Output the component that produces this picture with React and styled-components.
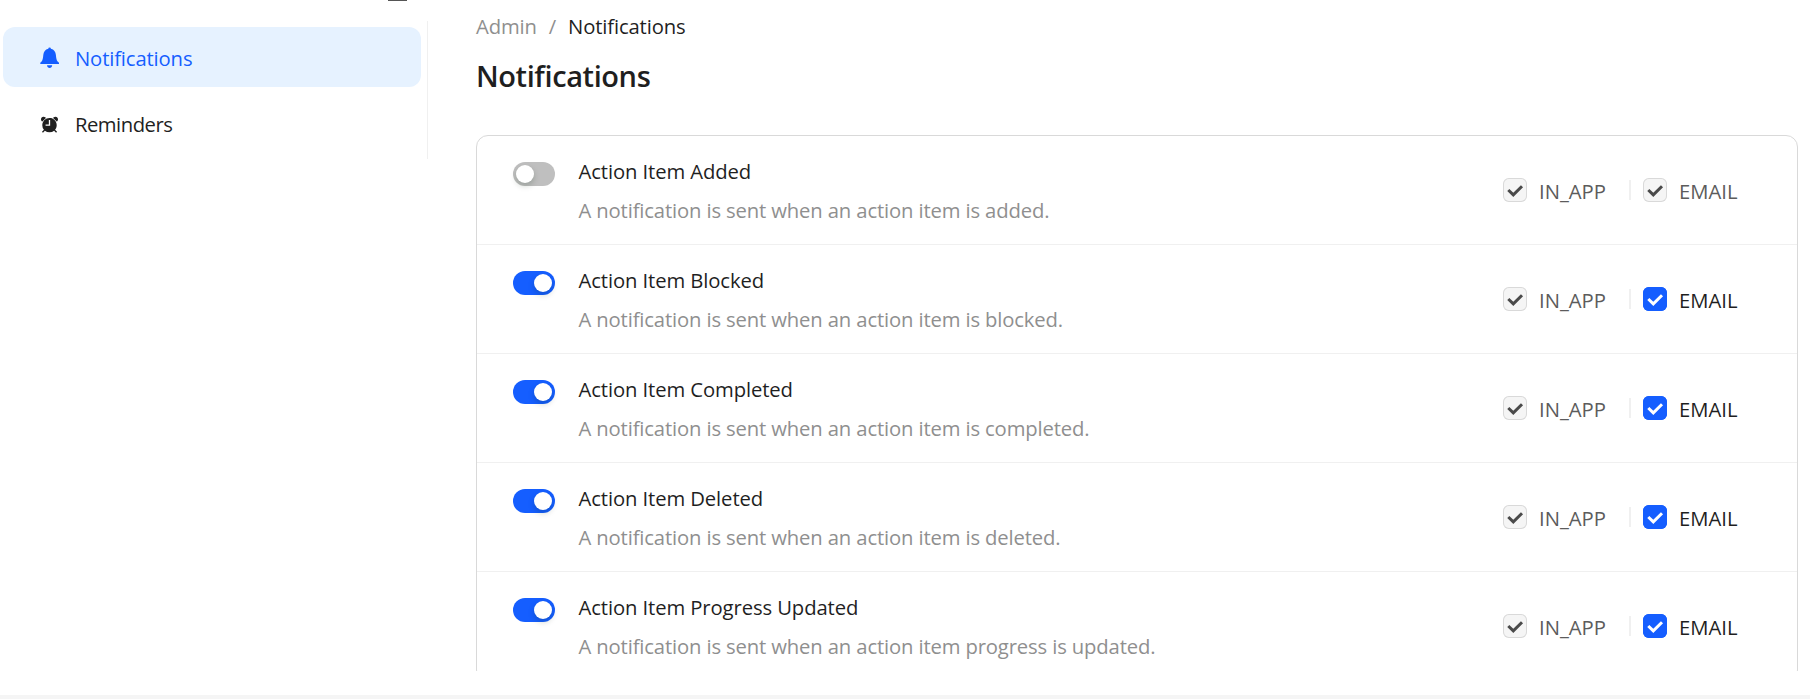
import React, { useState } from 'react'
import styled, { createGlobalStyle } from 'styled-components';
import { IoAlarmSharp } from 'react-icons/io5';

const GlobalStyle = createGlobalStyle`
  * {
    box-sizing: border-box;
  }
  body {
    margin: 0;
    background-color: #fff;
    color: #1f1f1f;
    font-family: "Open Sans", "Noto Sans", sans-serif;
    font-size: 20.25px;
    letter-spacing: -0.14px;
    line-height: 33px;
  }
`

const Page = styled.div`
  height: 699px;
  display: flex;
  flex-direction: column;
  overflow: hidden;
`

const Body = styled.div`
  height: 671px;
  display: flex;
  overflow: hidden;
`

const Sider = styled.aside`
  width: 428px;
  flex-shrink: 0;
`

const Collapse = styled.div`
  width: 19px;
  height: 1px;
  margin: 0 0 20px 388px;
  background-color: #555;
`

const Menu = styled.nav`
  height: 138px;
  padding: 6px 6px 0 3px;
  border-right: 1px solid #f0f0f0;
  display: flex;
  flex-direction: column;
  gap: 6px;
`

const MenuItem = styled.a`
  height: 60px;
  padding: 2px 0 0 36px;
  display: flex;
  align-items: center;
  gap: 15px;
  border-radius: 12px;
  color: ${(props) => (props.$active ? '#155eff' : '#1f1f1f')};
  background-color: ${(props) => (props.$active ? '#e6f2ff' : 'transparent')};
  cursor: pointer;
`

const MenuIcon = styled.span`
  width: 21px;
  height: 24px;
  display: flex;
  align-items: center;
  justify-content: center;
  flex-shrink: 0;

  svg {
    flex-shrink: 0;
  }
`

const MenuLabel = styled.span`
  letter-spacing: ${(props) => props.$spacing || 'inherit'};
`

const Main = styled.main`
  flex: 1;
  padding: 10px 12px 0 48px;
`

const Breadcrumb = styled.div`
  height: 33px;
  display: flex;
  gap: 12px;
  color: #8f8f8f;
`

const Current = styled.span`
  color: #1f1f1f;
`

const Title = styled.h1`
  height: 45px;
  margin: 10px 0 37px;
  font-size: 29px;
  font-weight: 600;
  line-height: 45px;
  letter-spacing: -0.4px;
`

const Card = styled.section`
  border: 1px solid #d9d9d9;
  border-radius: 12px;
`

const Row = styled.div`
  height: 109px;
  padding: 0 60px 0 36px;
  display: flex;
  border-bottom: 1px solid #f0f0f0;
`

const Switch = styled.button`
  width: 42px;
  height: 24px;
  margin-top: 26px;
  padding: 3px;
  display: flex;
  justify-content: ${(props) => (props.$on ? 'flex-end' : 'flex-start')};
  flex-shrink: 0;
  border: none;
  border-radius: 12px;
  background-color: ${(props) => (props.$on ? '#155eff' : '#bfbfbf')};
  cursor: pointer;
`

const Handle = styled.span`
  width: 18px;
  height: 18px;
  border-radius: 50%;
  background-color: #fff;
  box-shadow: 0 3px 6px rgba(0, 35, 11, 0.2);
`

const Info = styled.div`
  flex: 1;
  margin-left: 23.5px;
  padding-top: 19px;
`

const Name = styled.div`
  height: 39px;
  letter-spacing: -0.1px;
`

const Description = styled.div`
  color: #8f8f8f;
`

const Channels = styled.div`
  height: 24px;
  margin-top: 42px;
  display: flex;
  align-items: center;
`

const Channel = styled.label`
  width: ${(props) => props.$width};
  display: flex;
  align-items: center;
  gap: 12px;
  color: ${(props) => (props.$disabled ? '#5c5c5c' : '#1f1f1f')};
  cursor: ${(props) => (props.$disabled ? 'not-allowed' : 'pointer')};
`

const Box = styled.span`
  width: 24px;
  height: 24px;
  flex-shrink: 0;
  border-radius: 6px;
  background-color: ${(props) => (props.$disabled ? '#f5f5f5' : '#155eff')};
  box-shadow: inset 0 0 0 1px ${(props) => (props.$disabled ? '#d9d9d9' : '#155eff')};
  color: ${(props) => (props.$disabled ? '#4a4a4a' : '#fff')};

  svg {
    display: block;
  }
`

const ChannelName = styled.span`
  padding-top: 2px;
  letter-spacing: 0;
`

const Divider = styled.span`
  width: 2px;
  height: 20px;
  margin-right: 12px;
  background-color: #f0f0f0;
`

const Footer = styled.footer`
  height: 4px;
  margin-top: 24px;
  background-color: #f5f5f5;
`

const items = [
  { name: 'Action Item Added', event: 'action item is added', on: false },
  { name: 'Action Item Blocked', event: 'action item is blocked', on: true },
  { name: 'Action Item Completed', event: 'action item is completed', on: true },
  { name: 'Action Item Deleted', event: 'action item is deleted', on: true },
  { name: 'Action Item Progress Updated', event: 'action item progress is updated', on: true },
]

function BellIcon() {
  return (
    <svg width="20" height="22" viewBox="0 0 20 22" fill="currentColor">
      <path d="M8.3 1.7 A1.3 1.3 0 0 1 10.9 1.7 C14 2.4 15.6 4.8 15.9 8 C16.1 11 16.6 13 17.4 14.3 L19 15.7 V17 H0.3 V15.7 L1.8 14.3 C2.6 13 3.1 11 3.3 8 C3.6 4.8 5.2 2.4 8.3 1.7 Z" />
      <path d="M7 18.2 H12.2 C12 19.9 11 21 9.6 21 C8.2 21 7.2 19.9 7 18.2 Z" />
    </svg>
  )
}

function Checkbox({ label, disabled, width }) {
  return (
    <Channel $disabled={disabled} $width={width}>
      <Box $disabled={disabled}>
        <svg width="24" height="24" viewBox="0 0 24 24" fill="none">
          <path d="M5.3 12 L10.3 16.9 L19 8.3" stroke="currentColor" strokeWidth="3" />
        </svg>
      </Box>
      <ChannelName>{label}</ChannelName>
    </Channel>
  )
}

function App() {

  const [list, setList] = useState(items)

  const toggleHandler = (name) => {
    setList(list.map((item) => (
      item.name === name ? { ...item, on: !item.on } : item
    )))
  }

  return (
    <>
      <GlobalStyle />
      <Page>
        <Body>
          <Sider>
            <Collapse />
            <Menu>
              <MenuItem $active>
                <MenuIcon><BellIcon /></MenuIcon>
                <MenuLabel>Notifications</MenuLabel>
              </MenuItem>
              <MenuItem>
                <MenuIcon><IoAlarmSharp size={21} /></MenuIcon>
                <MenuLabel $spacing='-0.5px'>Reminders</MenuLabel>
              </MenuItem>
            </Menu>
          </Sider>
          <Main>
            <Breadcrumb>
              <span>Admin</span>
              <span>/</span>
              <Current>Notifications</Current>
            </Breadcrumb>
            <Title>Notifications</Title>
            <Card>
              {list.map((item) => (
                <Row key={item.name}>
                  <Switch $on={item.on} onClick={() => toggleHandler(item.name)}>
                    <Handle />
                  </Switch>
                  <Info>
                    <Name>{item.name}</Name>
                    <Description>A notification is sent when an {item.event}.</Description>
                  </Info>
                  <Channels>
                    <Checkbox label='IN_APP' width='126px' disabled />
                    <Divider />
                    <Checkbox label='EMAIL' width='94px' disabled={!item.on} />
                  </Channels>
                </Row>
              ))}
            </Card>
          </Main>
        </Body>
        <Footer />
      </Page>
    </>
  )
}

export default App
